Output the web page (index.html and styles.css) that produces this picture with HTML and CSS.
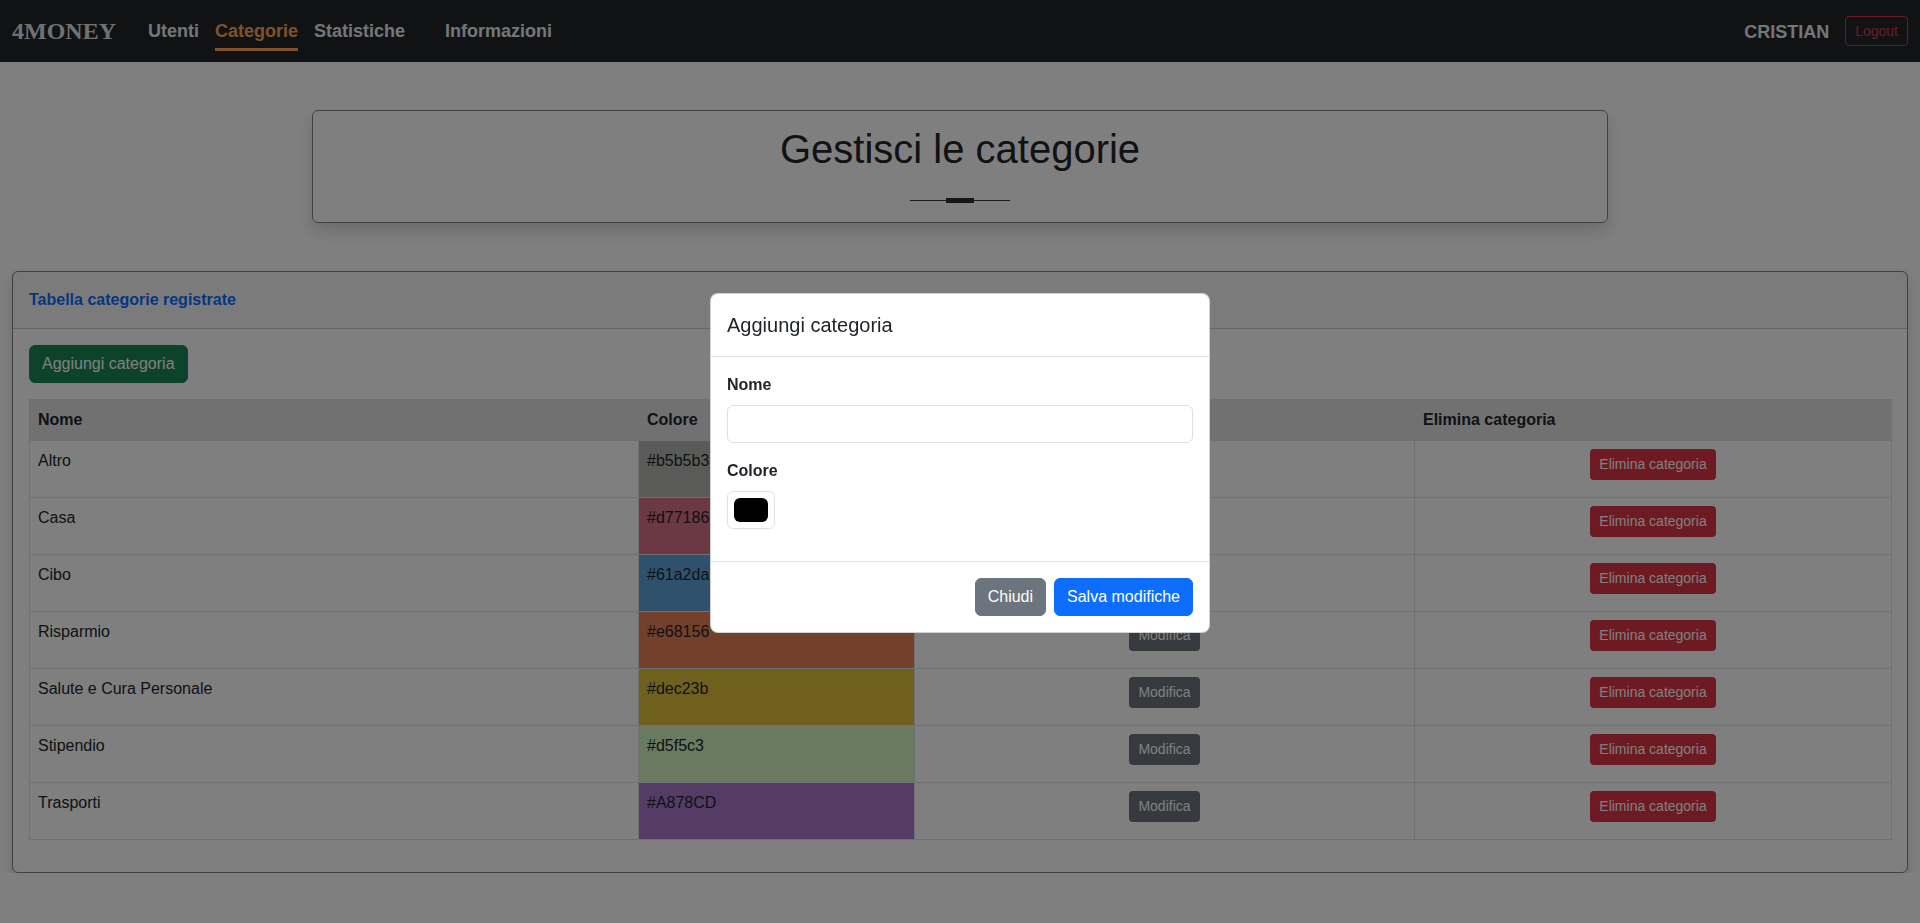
FILE: index.html
```html
<!DOCTYPE html>
<html lang="it">
<head>
<meta charset="utf-8">
<title>4MONEY - Categorie</title>
<link rel="stylesheet" href="styles.css">
</head>
<body>
<nav class="topbar">
  <a class="brand" href="#">4MONEY</a>
  <ul class="nav-links">
    <li><a class="nav-link" href="#">Utenti</a></li>
    <li><a class="nav-link active" href="#">Categorie</a></li>
    <li><a class="nav-link" href="#">Statistiche</a></li>
    <li class="nav-item-far"><a class="nav-link" href="#">Informazioni</a></li>
  </ul>
  <div class="user-area">
    <span class="username">CRISTIAN</span>
    <button class="btn-logout" type="button">Logout</button>
  </div>
</nav>

<main>
  <div class="container">
    <section class="title-card">
      <h1 class="page-title">Gestisci le categorie</h1>
      <div class="divider"><span class="divider-line"></span><span class="divider-knob"></span><span class="divider-line"></span></div>
    </section>
  </div>

  <div class="container-fluid">
    <section class="card">
      <div class="card-header">Tabella categorie registrate</div>
      <div class="card-body">
        <button class="btn btn-success" type="button">Aggiungi categoria</button>
        <table class="table">
          <colgroup>
            <col class="col-nome">
            <col class="col-colore">
            <col class="col-modifica">
            <col class="col-elimina">
          </colgroup>
          <thead>
            <tr><th>Nome</th><th>Colore</th><th>Modifica categoria</th><th>Elimina categoria</th></tr>
          </thead>
          <tbody>
            <tr><td>Altro</td><td style="background-color:#b5b5b3">#b5b5b3</td><td class="center"><button class="btn-sm btn-secondary" type="button">Modifica</button></td><td class="center"><button class="btn-sm btn-danger" type="button">Elimina categoria</button></td></tr>
            <tr><td>Casa</td><td style="background-color:#d77186">#d77186</td><td class="center"><button class="btn-sm btn-secondary" type="button">Modifica</button></td><td class="center"><button class="btn-sm btn-danger" type="button">Elimina categoria</button></td></tr>
            <tr><td>Cibo</td><td style="background-color:#61a2da">#61a2da</td><td class="center"><button class="btn-sm btn-secondary" type="button">Modifica</button></td><td class="center"><button class="btn-sm btn-danger" type="button">Elimina categoria</button></td></tr>
            <tr><td>Risparmio</td><td style="background-color:#e68156">#e68156</td><td class="center"><button class="btn-sm btn-secondary" type="button">Modifica</button></td><td class="center"><button class="btn-sm btn-danger" type="button">Elimina categoria</button></td></tr>
            <tr><td>Salute e Cura Personale</td><td style="background-color:#dec23b">#dec23b</td><td class="center"><button class="btn-sm btn-secondary" type="button">Modifica</button></td><td class="center"><button class="btn-sm btn-danger" type="button">Elimina categoria</button></td></tr>
            <tr><td>Stipendio</td><td style="background-color:#d5f5c3">#d5f5c3</td><td class="center"><button class="btn-sm btn-secondary" type="button">Modifica</button></td><td class="center"><button class="btn-sm btn-danger" type="button">Elimina categoria</button></td></tr>
            <tr><td>Trasporti</td><td style="background-color:#A878CD">#A878CD</td><td class="center"><button class="btn-sm btn-secondary" type="button">Modifica</button></td><td class="center"><button class="btn-sm btn-danger" type="button">Elimina categoria</button></td></tr>
          </tbody>
        </table>
      </div>
    </section>
  </div>
</main>

<div class="modal-layer">
  <div class="modal" role="dialog">
    <div class="modal-header">
      <h5 class="modal-title">Aggiungi categoria</h5>
    </div>
    <div class="modal-body">
      <div class="form-group">
        <label class="form-label" for="nome">Nome</label>
        <input class="form-control" id="nome" type="text">
      </div>
      <div class="form-group">
        <label class="form-label" for="colore">Colore</label>
        <input class="form-color" id="colore" type="color" value="#000000">
      </div>
    </div>
    <div class="modal-footer">
      <button class="btn btn-secondary" type="button">Chiudi</button>
      <button class="btn btn-primary" type="button">Salva modifiche</button>
    </div>
  </div>
</div>
</body>
</html>
```

FILE: styles.css
```css
* { box-sizing: border-box; }

html, body {
  margin: 0;
  padding: 0;
}

body {
  font-family: "Liberation Sans", Arial, sans-serif;
  font-size: 16px;
  line-height: 1.5;
  color: #212529;
  background: #fff;
}

/* ---------- navbar ---------- */
.topbar {
  height: 62px;
  background: #212529;
  display: flex;
  align-items: center;
  padding: 0 12px;
}

.brand {
  font-family: "Liberation Serif", "Times New Roman", serif;
  font-weight: 700;
  font-size: 24px;
  line-height: normal;
  color: #dee2e6;
  text-decoration: none;
}

.nav-links {
  list-style: none;
  margin: 0 0 0 32px;
  padding: 0;
  display: flex;
  gap: 16px;
}

.nav-item-far { margin-left: 24px; }

.nav-link {
  display: block;
  font-weight: 700;
  font-size: 18px;
  line-height: 24px;
  padding: 8px 0 5px;
  border-bottom: 3px solid transparent;
  color: #e9ecef;
  text-decoration: none;
}

.nav-link.active {
  color: #ffa552;
  border-bottom-color: #ffa552;
}

.user-area {
  margin-left: auto;
  display: flex;
  align-items: center;
  gap: 16px;
}

.username {
  font-weight: 700;
  font-size: 18px;
  line-height: 24px;
  color: #e9ecef;
  padding-top: 2px;
}

.btn-logout {
  font-family: inherit;
  font-size: 14px;
  line-height: 20px;
  padding: 4px 9px;
  border: 1px solid #dc3545;
  border-radius: 4px;
  color: #dc3545;
  background: transparent;
}

/* ---------- layout ---------- */
.container {
  max-width: 1320px;
  margin: 48px auto 0;
  padding: 0 12px;
}

.container-fluid {
  margin-top: 48px;
  padding: 0 12px;
}

/* ---------- title card ---------- */
.title-card {
  border: 1px solid #7a8088;
  border-radius: 6px;
  box-shadow: 0 8px 16px rgba(0, 0, 0, .15);
  padding: 14px 16px 19px;
  text-align: center;
}

.page-title {
  margin: 0;
  font-size: 40px;
  font-weight: 400;
  line-height: 48px;
}

.divider {
  margin: 25px auto 0;
  width: 100px;
  height: 5px;
  display: flex;
  align-items: center;
}

.divider-line {
  flex: 1;
  height: 1px;
  background: #343a40;
}

.divider-knob {
  width: 28px;
  height: 5px;
  background: #2b3035;
}

/* ---------- table card ---------- */
.card {
  border: 1px solid #7a8088;
  border-radius: 6px;
  box-shadow: 0 8px 16px rgba(0, 0, 0, .15);
  overflow: hidden;
}

.card-header {
  padding: 16px;
  font-weight: 700;
  color: #0d6efd;
  background: rgba(0, 0, 0, .03);
  border-bottom: 1px solid rgba(0, 0, 0, .175);
}

.card-body {
  padding: 16px;
}

.btn {
  font-family: inherit;
  font-size: 16px;
  line-height: 24px;
  padding: 6px 12px;
  border: 1px solid transparent;
  border-radius: 6px;
  color: #fff;
}

.btn-success { background: #198754; border-color: #198754; }
.btn-secondary { background: #6c757d; border-color: #6c757d; }
.btn-primary { background: #0d6efd; border-color: #0d6efd; }
.btn-danger { background: #dc3545; border-color: #dc3545; }

.btn-sm {
  font-family: inherit;
  font-size: 14px;
  line-height: 21px;
  padding: 4px 8px;
  border: 1px solid transparent;
  border-radius: 4px;
  color: #fff;
}

.table {
  margin: 16px 0;
  width: 100%;
  table-layout: fixed;
  border-collapse: collapse;
  vertical-align: top;
}

.col-nome { width: 609px; }
.col-colore { width: 276px; }
.col-modifica { width: 500px; }
.col-elimina { width: 477px; }

.table th,
.table td {
  border: 1px solid #dee2e6;
  padding: 8px;
  text-align: left;
  vertical-align: top;
  white-space: nowrap;
  overflow: hidden;
}

.table th {
  background: #e2e3e5;
  font-weight: 700;
}

.table td {
  height: 57px;
}

.table td.center { text-align: center; }

/* ---------- modal ---------- */
.modal-layer {
  position: fixed;
  inset: 0;
  background: rgba(0, 0, 0, .5);
  display: flex;
  align-items: center;
  justify-content: center;
  padding-top: 3px;
}

.modal {
  width: 500px;
  background: #fff;
  border: 1px solid rgba(0, 0, 0, .175);
  border-radius: 8px;
}

.modal-header {
  padding: 16px;
  border-bottom: 1px solid #dee2e6;
}

.modal-title {
  margin: 0;
  font-size: 20px;
  font-weight: 400;
  line-height: 30px;
}

.modal-body {
  padding: 16px;
}

.form-group { margin-bottom: 16px; }

.form-label {
  display: block;
  font-weight: 700;
  margin-bottom: 8px;
}

.form-control {
  display: block;
  width: 100%;
  height: 38px;
  padding: 6px 12px;
  font-family: inherit;
  font-size: 16px;
  border: 1px solid #dee2e6;
  border-radius: 6px;
  background: #fff;
}

.form-color {
  display: block;
  width: 48px;
  height: 38px;
  padding: 6px;
  border: 1px solid #dee2e6;
  border-radius: 6px;
  background: #fff;
  -webkit-appearance: none;
  appearance: none;
  margin: 0;
}

.form-color::-webkit-color-swatch-wrapper { padding: 0; }
.form-color::-webkit-color-swatch { border: 0; border-radius: 6px; }

.modal-footer {
  display: flex;
  justify-content: flex-end;
  align-items: center;
  padding: 12px;
  border-top: 1px solid #dee2e6;
}

.modal-footer .btn { margin: 4px; }
```
